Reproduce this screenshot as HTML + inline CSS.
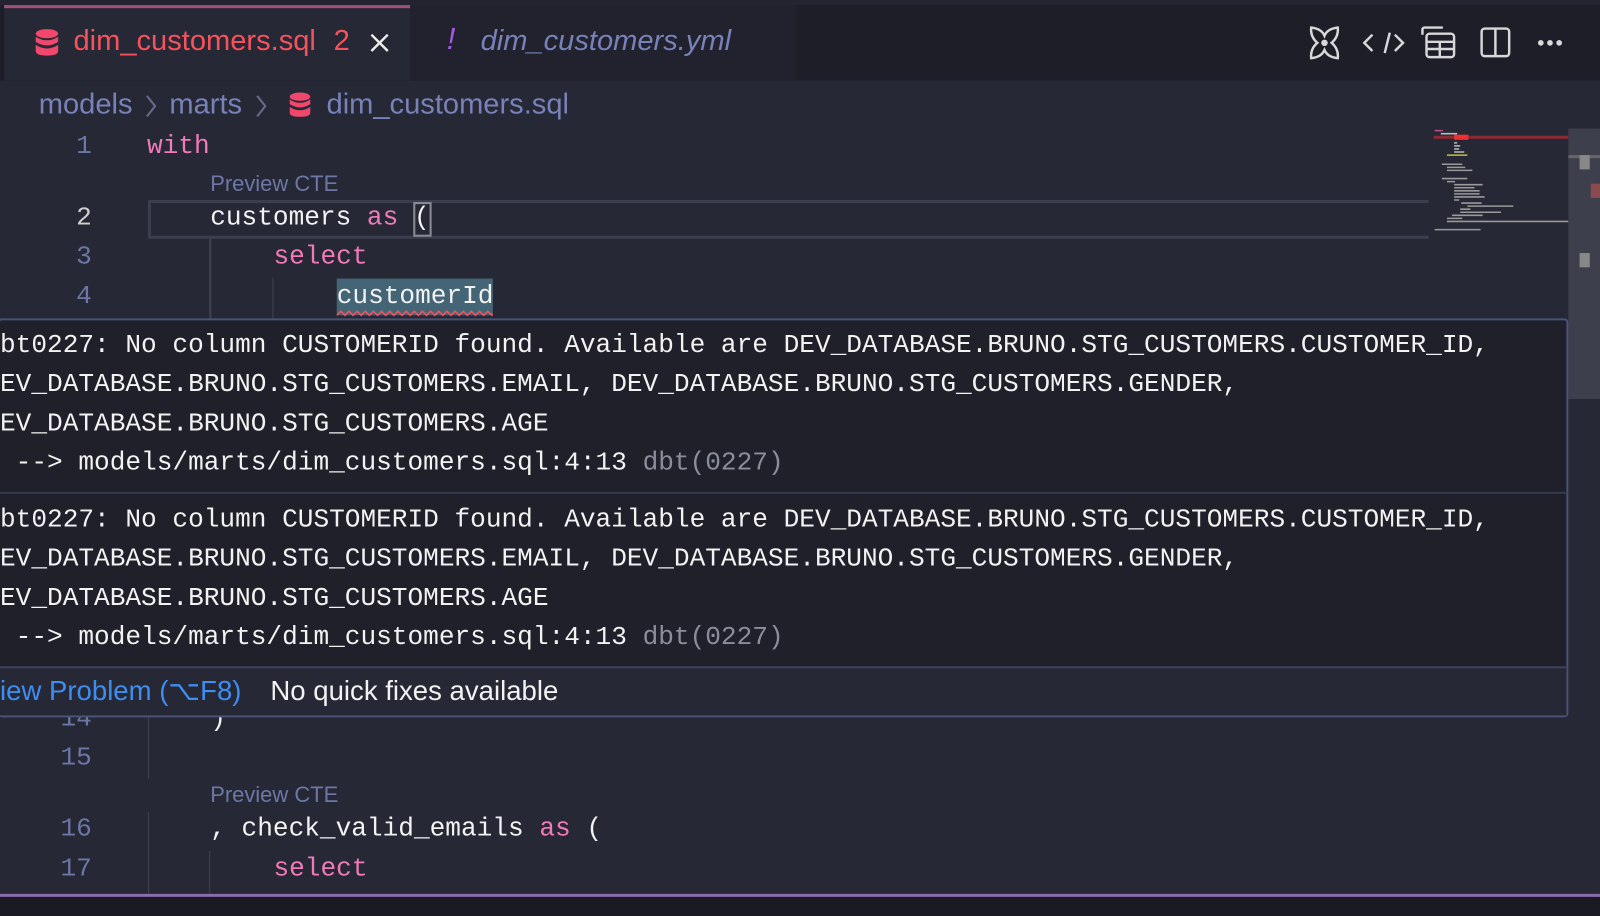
<!DOCTYPE html>
<html><head><meta charset="utf-8"><style>
*{margin:0;padding:0;box-sizing:border-box}
body{width:1600px;height:898px;overflow:hidden;background:#262835;position:relative;font-family:"Liberation Sans",sans-serif}
#w{position:absolute;left:0;top:0;width:1568px;height:880px;transform:scale(1.0204);transform-origin:0 0}
.abs{position:absolute;white-space:pre}
.mono{font-family:"Liberation Mono",monospace;font-size:25.6px;line-height:38.4px}
.ln{color:#6c77a6;width:90px;text-align:right;left:0}
.kw{color:#f07ab8}
.w{color:#f2f2f2}
.gray{color:#8a8d9c}
</style></head><body><div id="w">
<!-- tab bar -->
<div class="abs" style="left:0;top:0;width:1568px;height:79px;background:#1d1e28"></div>
<div class="abs" style="left:0;top:0;width:1568px;height:5px;background:#23242f"></div>
<div class="abs" style="left:4px;top:5px;width:398px;height:74px;background:#262835;border-top:3px solid #a0517c"></div>
<div class="abs" style="left:402px;top:5px;width:378px;height:74px;background:#21222d"></div>
<svg class="abs" style="left:34px;top:28px" width="24" height="28" viewBox="0 0 24 28"><g fill="#f2476d"><ellipse cx="12" cy="5" rx="11" ry="4.5"/><path d="M1 8q11 7 22 0v5q-11 7-22 0z"/><path d="M1 16q11 7 22 0v6q0 4.5-11 4.5T1 22z"/></g></svg>
<div class="abs" style="left:72px;top:24px;font-size:28.5px;color:#f5525d">dim_customers.sql</div>
<div class="abs" style="left:327px;top:24px;font-size:28.5px;color:#f5525d">2</div>
<svg class="abs" style="left:362px;top:32px" width="20" height="20"><path d="M2 2L18 18M18 2L2 18" stroke="#eee" stroke-width="2.4"/></svg>
<div class="abs" style="left:438px;top:22px;font-size:30px;color:#a25ce0;font-style:italic">!</div>
<div class="abs" style="left:471px;top:24px;font-size:28.5px;color:#7882b8;font-style:italic">dim_customers.yml</div>
<!-- right icons -->
<svg class="abs" style="left:1280px;top:22px" width="260" height="40" viewBox="0 0 260 40" fill="none" stroke="#d8d8d8" stroke-width="2.4">
<path d="M5 5q10 1 13 8q3-7 13-8q1 9-6 15q7 6 6 15q-10-1-13-8q-3 7-13 8q-1-9 6-15q-7-6-6-15z"/><circle cx="18" cy="20" r="2" fill="#d8d8d8"/>
<path d="M65 12l-8 8 8 8M77 30l5-20M87 12l8 8-8 8"/>
<path d="M114 12v-5a2 2 0 0 1 2-2h18"/><rect x="118" y="11" width="27" height="23" rx="3"/><path d="M118 19h27M118 26h27M131 19v15"/>
<rect x="172" y="6" width="27" height="27" rx="3"/><path d="M185.5 6v27"/>
<circle cx="230" cy="20" r="1.6" fill="#d8d8d8"/><circle cx="239" cy="20" r="1.6" fill="#d8d8d8"/><circle cx="248" cy="20" r="1.6" fill="#d8d8d8"/>
</svg>
<!-- breadcrumb -->
<div class="abs" style="left:38px;top:86px;font-size:28.5px;color:#7882b8">models</div>
<svg class="abs" style="left:141px;top:91px" width="14" height="26"><path d="M3 3l8 10-8 10" stroke="#666c8c" stroke-width="2" fill="none"/></svg>
<div class="abs" style="left:166px;top:86px;font-size:28.5px;color:#7882b8">marts</div>
<svg class="abs" style="left:249px;top:91px" width="14" height="26"><path d="M3 3l8 10-8 10" stroke="#666c8c" stroke-width="2" fill="none"/></svg>
<svg class="abs" style="left:283px;top:90px" width="22" height="26" viewBox="0 0 24 28"><g fill="#f2476d"><ellipse cx="12" cy="5" rx="11" ry="4.5"/><path d="M1 8q11 7 22 0v5q-11 7-22 0z"/><path d="M1 16q11 7 22 0v6q0 4.5-11 4.5T1 22z"/></g></svg>
<div class="abs" style="left:320px;top:86px;font-size:28.5px;color:#7882b8">dim_customers.sql</div>
<!-- current line -->
<div class="abs" style="left:145px;top:196px;width:1255px;height:38px;border:3px solid #3c3e4f;border-right:none"></div>
<div class="abs" style="left:205px;top:234px;width:2px;height:80px;background:#40434f"></div>
<div class="abs" style="left:267px;top:272px;width:1px;height:40px;background:#40434f"></div>
<div class="abs" style="left:330px;top:273px;width:153px;height:36px;background:#436576"></div>
<!-- code -->
<div class="abs mono ln" style="top:125px">1</div>
<div class="abs mono kw" style="left:144px;top:125px">with</div>
<div class="abs" style="left:206px;top:168px;font-size:21.5px;color:#6c77a6">Preview CTE</div>
<div class="abs mono ln" style="top:195px;color:#d0d0d0">2</div>
<div class="abs mono w" style="left:206px;top:195px">customers <span class="kw">as</span> (</div>
<div class="abs" style="left:405px;top:198px;width:18px;height:34px;border:2px solid #8a8c96"></div>
<div class="abs mono ln" style="top:233px">3</div>
<div class="abs mono kw" style="left:268px;top:233px">select</div>
<div class="abs mono ln" style="top:272px">4</div>
<div class="abs mono w" style="left:330px;top:272px">customerId</div>
<svg class="abs" style="left:330px;top:303px" width="153" height="8"><path d="M0 6l4-4 4 4 4-4 4 4 4-4 4 4 4-4 4 4 4-4 4 4 4-4 4 4 4-4 4 4 4-4 4 4 4-4 4 4 4-4 4 4 4-4 4 4 4-4 4 4 4-4 4 4 4-4 4 4 4-4 4 4 4-4 4 4 4-4 4 4 4-4 4 4 4-4 4 4 4-4 4 4 4-4 4 4" stroke="#f5525d" stroke-width="1.6" fill="none"/></svg>
<!-- minimap/scrollbar -->
<svg class="abs" style="left:1403px;top:125px" width="134" height="105">
<g stroke-width="1.5"><path d="M3 3h8" stroke="#c05090"/><path d="M9 6h16" stroke="#bbb"/><path d="M15 9h8" stroke="#c05090"/>
<path d="M22 15h3M22 18h6M22 21h5M22 24h10" stroke="#bbb"/><path d="M15 27h20" stroke="#c0c040"/>
<path d="M10 36h20M15 39h18M15 42h25M10 50h25M15 53h8M22 56h28M22 59h20M22 62h25M22 65h25M22 68h30M22 71h5M29 74h20M35 77h45M28 80h10M28 83h40M20 86h30M15 89h15M15 92h120M3 100h45" stroke="#999"/></g>
</svg>
<div class="abs" style="left:1405px;top:133px;width:132px;height:3px;background:#8a2a32"></div>
<div class="abs" style="left:1425px;top:132px;width:14px;height:5px;background:#f03030"></div>
<div class="abs" style="left:1537px;top:126px;width:31px;height:265px;background:#3d3f4c"></div>
<div class="abs" style="left:1537px;top:152px;width:31px;height:3px;background:#666"></div>
<div class="abs" style="left:1548px;top:152px;width:10px;height:14px;background:#888"></div>
<div class="abs" style="left:1559px;top:180px;width:9px;height:14px;background:#8a4a50"></div>
<div class="abs" style="left:1548px;top:248px;width:10px;height:14px;background:#888"></div>
<!-- line 14 (partially hidden) -->
<div class="abs mono ln" style="top:686px">14</div>
<div class="abs mono w" style="left:206px;top:686px">)</div>
<!-- hover -->
<div class="abs" style="left:-2px;top:312px;width:1539px;height:391px;background:#1f2029;border:2px solid #4a5275;border-radius:4px"></div>
<div class="abs" style="left:0;top:482px;width:1536px;height:2px;background:#363a4e"></div>
<div class="abs" style="left:0;top:653px;width:1536px;height:2px;background:#3e4460"></div>
<div class="abs" style="left:0;top:655px;width:1535px;height:46px;background:#262836"></div>
<div class="abs mono w" style="left:0;top:320px">bt0227: No column CUSTOMERID found. Available are DEV_DATABASE.BRUNO.STG_CUSTOMERS.CUSTOMER_ID,
EV_DATABASE.BRUNO.STG_CUSTOMERS.EMAIL, DEV_DATABASE.BRUNO.STG_CUSTOMERS.GENDER,
EV_DATABASE.BRUNO.STG_CUSTOMERS.AGE
 --&gt; models/marts/dim_customers.sql:4:13 <span class="gray">dbt(0227)</span></div>
<div class="abs mono w" style="left:0;top:491px">bt0227: No column CUSTOMERID found. Available are DEV_DATABASE.BRUNO.STG_CUSTOMERS.CUSTOMER_ID,
EV_DATABASE.BRUNO.STG_CUSTOMERS.EMAIL, DEV_DATABASE.BRUNO.STG_CUSTOMERS.GENDER,
EV_DATABASE.BRUNO.STG_CUSTOMERS.AGE
 --&gt; models/marts/dim_customers.sql:4:13 <span class="gray">dbt(0227)</span></div>
<div class="abs" style="left:0;top:662px;font-size:27px;color:#3d8ef0">iew Problem (⌥F8)</div>
<div class="abs" style="left:265px;top:662px;font-size:27px;color:#f2f2f2">No quick fixes available</div>
<!-- bottom code -->
<div class="abs" style="left:145px;top:703px;width:1px;height:60px;background:#40434f"></div>
<div class="abs mono ln" style="top:724px">15</div>
<div class="abs" style="left:206px;top:767px;font-size:21.5px;color:#6c77a6">Preview CTE</div>
<div class="abs" style="left:145px;top:796px;width:1px;height:80px;background:#40434f"></div>
<div class="abs" style="left:205px;top:834px;width:1px;height:42px;background:#40434f"></div>
<div class="abs mono ln" style="top:794px">16</div>
<div class="abs mono w" style="left:206px;top:794px">, check_valid_emails <span class="kw">as</span> (</div>
<div class="abs mono ln" style="top:833px">17</div>
<div class="abs mono kw" style="left:268px;top:833px">select</div>
<div class="abs" style="left:0;top:876px;width:1568px;height:3px;background:#8a6ab0"></div>
<div class="abs" style="left:0;top:879px;width:1568px;height:19px;background:#1a1b22"></div>
</div></body></html>
